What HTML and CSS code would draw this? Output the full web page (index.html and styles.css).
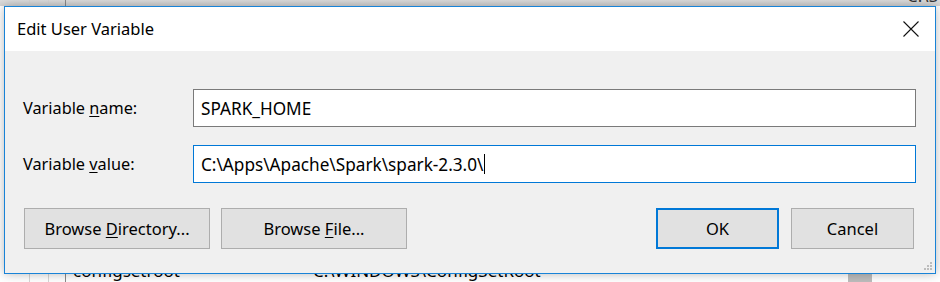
FILE: index.html
```html
<!DOCTYPE html>
<html lang="en">
<head>
  <meta charset="UTF-8">
  <title>Edit User Variable</title>
  <link rel="stylesheet" href="styles.css">
</head>
<body>
  <!-- Ventana de fondo (lista de variables del sistema) -->
  <div class="back">
    <div class="back-head">
      <span class="col c1"></span><span class="col c2"></span><span class="col c3"></span>
      <span class="head-tail">C:\S</span>
    </div>
    <div class="back-rows">
      <div class="row"><span class="col c1"></span><span class="col c2"></span><span class="col c3"></span></div>
      <div class="row"><span class="col c1"></span><span class="col c2"></span><span class="col c3"></span></div>
      <div class="row"><span class="col c1"></span><span class="col c2"></span><span class="col c3"></span></div>
      <div class="row"><span class="col c1"></span><span class="col c2"></span><span class="col c3"></span></div>
      <div class="row"><span class="col c1"></span><span class="col c2"></span><span class="col c3"></span></div>
      <div class="row"><span class="col c1"></span><span class="col c2"></span><span class="col c3"></span></div>
      <div class="row"><span class="col c1"></span><span class="col c2"></span><span class="col c3"></span></div>
      <div class="row"><span class="col c1"></span><span class="col c2"></span><span class="col c3"></span></div>
      <div class="row"><span class="col c1"></span><span class="col c2"></span><span class="col c3"></span></div>
      <div class="row"><span class="col c1"></span><span class="col c2"></span><span class="col c3"></span></div>
      <div class="row"><span class="col c1"></span><span class="col c2"></span><span class="col c3"></span></div>
      <div class="row"><span class="col c1"></span><span class="col c2"></span><span class="col c3"></span></div>
      <div class="row last"><span class="col c1"></span><span class="col c2"></span><span class="col c3"></span><span class="name">configsetroot</span><span class="val">C:\WINDOWS\ConfigSetRoot</span><span class="scroll"></span></div>
    </div>
  </div>

  <!-- Dialogo -->
  <div class="dialog">
    <div class="titlebar">
      <span class="title">Edit User Variable</span>
      <svg class="close" width="16" height="16" viewBox="0 0 16 16">
        <path d="M0.5 0.5 L15.5 15.5 M15.5 0.5 L0.5 15.5" stroke="#111" stroke-width="1.1" fill="none"/>
      </svg>
    </div>
    <div class="body">
      <div class="field">
        <label class="label">Variable <u>n</u>ame:</label>
        <div class="input">SPARK_HOME</div>
      </div>
      <div class="field">
        <label class="label">Variable <u>v</u>alue:</label>
        <div class="input focus">C:\Apps\Apache\Spark\spark-2.3.0\<span class="caret"></span></div>
      </div>
      <div class="buttons">
        <div class="left-btns">
          <button class="btn wide">Browse <u>D</u>irectory...</button>
          <button class="btn wide">Browse <u>F</u>ile...</button>
        </div>
        <div class="right-btns">
          <button class="btn default">OK</button>
          <button class="btn">Cancel</button>
        </div>
      </div>
      <svg class="grip" width="10" height="10" viewBox="0 0 10 10">
        <rect x="7" y="1" width="2" height="2" fill="#bcbcbc"/>
        <rect x="4" y="4" width="2" height="2" fill="#bcbcbc"/>
        <rect x="7" y="4" width="2" height="2" fill="#bcbcbc"/>
        <rect x="1" y="7" width="2" height="2" fill="#bcbcbc"/>
        <rect x="4" y="7" width="2" height="2" fill="#bcbcbc"/>
        <rect x="7" y="7" width="2" height="2" fill="#bcbcbc"/>
      </svg>
    </div>
  </div>
</body>
</html>
```

FILE: styles.css
```css
/* Pagina base */
body {
  margin: 0;
  width: 940px;
  height: 282px;
  overflow: hidden;
  position: relative;
  font-family: "Noto Sans", "Open Sans", sans-serif;
  font-size: 16px;
  color: #000;
  background: #fff;
}

/* Ventana de fondo */
.back {
  width: 940px;
}

.back-head {
  position: relative;
  height: 6px;
  background: linear-gradient(#dcdcdc, #d4d4d4);
}

.head-tail {
  position: absolute;
  right: 2px;
  top: -14px;
  font-size: 17px;
  line-height: 20px;
  color: #333;
}

.row {
  position: relative;
  height: 20px;
  white-space: nowrap;
}

.col {
  position: absolute;
  top: 0;
  bottom: 0;
  width: 1px;
  background: #d6d6d6;
}

.c1 { left: 29px; }
.c2 { left: 48px; }
.c3 { left: 65px; background: #8a8a8a; }

.name,
.val {
  position: absolute;
  top: 14px;
  font-size: 17px;
  line-height: 22px;
}

.name { left: 73px; }
.val { left: 313px; }

.row.last {
  height: 36px;
}

.scroll {
  position: absolute;
  left: 848px;
  top: 0;
  width: 24px;
  height: 36px;
  background: #bdbdbd;
}

/* Dialogo */
.dialog {
  position: absolute;
  left: 4px;
  top: 6px;
  width: 930px;
  height: 266px;
  border: 1px solid #1883d7;
  background: #f0f0f0;
  box-shadow: 0 0 10px rgba(0, 0, 0, 0.28);
  display: flex;
  flex-direction: column;
}

.titlebar {
  height: 44px;
  background: #fff;
  display: flex;
  align-items: center;
  justify-content: space-between;
  padding: 0 16px 0 12px;
}

.title {
  font-size: 16.5px;
  margin-top: -1px;
}

.close {
  margin-top: -1px;
}

.body {
  position: relative;
  flex: 1;
  padding: 38px 19px 0 18px;
}

.field {
  display: flex;
  align-items: center;
  height: 38px;
  margin-bottom: 18px;
}

.label {
  width: 170px;
  font-size: 16.3px;
}

.label u,
.btn u {
  text-decoration-thickness: 1px;
  text-underline-offset: 2px;
}

.input {
  flex: 1;
  height: 36px;
  border: 1px solid #7a7a7a;
  background: #fff;
  display: flex;
  align-items: center;
  padding-left: 7px;
  font-size: 17.2px;
}

.input.focus {
  border-color: #0078d7;
}

.caret {
  display: inline-block;
  width: 1px;
  height: 20px;
  background: #000;
  margin-left: 1px;
}

/* Botones */
.buttons {
  display: flex;
  justify-content: space-between;
  padding-top: 7px;
  padding-left: 1px;
  padding-right: 2px;
}

.left-btns,
.right-btns {
  display: flex;
  gap: 11px;
}

.right-btns {
  gap: 12px;
}

.btn {
  width: 123px;
  height: 41px;
  background: #e1e1e1;
  border: 1px solid #adadad;
  font-family: inherit;
  font-size: 16.5px;
  color: #000;
  padding: 0;
}

.btn.wide {
  width: 186px;
}

.btn.default {
  border: 2px solid #0078d7;
}

.grip {
  position: absolute;
  right: 2px;
  bottom: 2px;
}
```
